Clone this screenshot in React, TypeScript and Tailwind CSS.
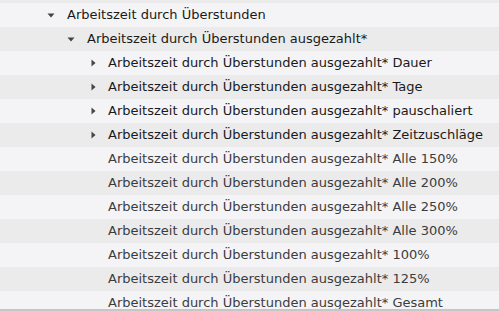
import React from "react";

type Row = { label: string; level: number; caret?: "down" | "right"; parent?: boolean };

const P = "Arbeitszeit durch Überstunden ausgezahlt*";

const rows: Row[] = [
  { label: "Arbeitszeit durch Überstunden", level: 1, caret: "down", parent: true },
  { label: P, level: 2, caret: "down", parent: true },
  { label: P + " Dauer", level: 3, caret: "right", parent: true },
  { label: P + " Tage", level: 3, caret: "right", parent: true },
  { label: P + " pauschaliert", level: 3, caret: "right", parent: true },
  { label: P + " Zeitzuschläge", level: 3, caret: "right", parent: true },
  { label: P + " Alle 150%", level: 3 },
  { label: P + " Alle 200%", level: 3 },
  { label: P + " Alle 250%", level: 3 },
  { label: P + " Alle 300%", level: 3 },
  { label: P + " 100%", level: 3 },
  { label: P + " 125%", level: 3 },
  { label: P + " Gesamt", level: 3 },
];

const pad: Record<number, string> = { 1: "pl-[46px]", 2: "pl-[66px]", 3: "pl-[87px]" };

function Caret({ dir }: { dir?: "down" | "right" }) {
  if (!dir) return <span className="w-[21px] shrink-0" />;
  return (
    <span className="w-[21px] shrink-0 flex items-center">
      {dir === "down" ? (
        <svg width="8" height="5" viewBox="0 0 8 5" className="ml-[1px]">
          <path d="M0.5 0.5 L7.5 0.5 L4 4.5 Z" fill="#444" />
        </svg>
      ) : (
        <svg width="5" height="8" viewBox="0 0 5 8" className="ml-[4px]">
          <path d="M0.5 0.5 L4.5 4 L0.5 7.5 Z" fill="#444" />
        </svg>
      )}
    </span>
  );
}

export default function App() {
  return (
    <div
      className="w-[499px] h-[311px] overflow-hidden flex flex-col bg-[#f4f4f6] border-b-2 border-[#c6c6c6]"
      style={{ fontFamily: '"DejaVu Sans", sans-serif' }}
    >
      <div className="h-[3px] shrink-0 bg-[#ebebeb]" />
      {rows.map((r, i) => (
        <div
          key={i}
          className={`h-[24px] shrink-0 flex items-center ${pad[r.level]} ${
            i % 2 === 0 ? "bg-[#f4f4f6]" : "bg-[#ebebeb]"
          }`}
        >
          <Caret dir={r.caret} />
          <span
            className={`text-[13px] whitespace-nowrap ${
              r.parent ? "text-[#1a1a1a]" : "text-[#3c3c3c]"
            }`}
          >
            {r.label}
          </span>
        </div>
      ))}
    </div>
  );
}
